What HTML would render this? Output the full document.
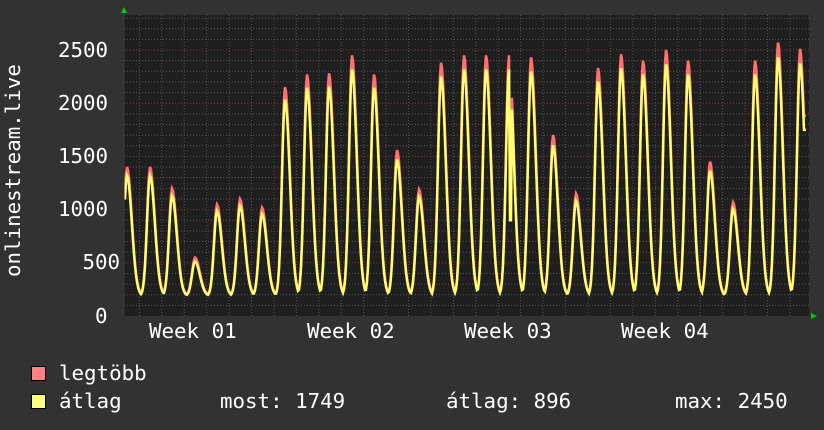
<!DOCTYPE html>
<html><head><meta charset="utf-8"><style>
html,body{margin:0;padding:0;background:#323232;}
body{width:824px;height:430px;position:relative;overflow:hidden;font-family:"DejaVu Sans Mono","Liberation Mono",monospace;color:#fff;}
.t{position:absolute;font-size:20.8px;white-space:pre;line-height:1;}
.sq{position:absolute;width:13px;height:13px;border:1px solid #000;}
</style></head><body>
<svg id="g" width="824" height="430" style="position:absolute;left:0;top:0"></svg>
<div class="t" style="left:58px;top:40px">2500</div>
<div class="t" style="left:58px;top:93px">2000</div>
<div class="t" style="left:58px;top:146px">1500</div>
<div class="t" style="left:58px;top:199px">1000</div>
<div class="t" style="left:70px;top:252px"> 500</div>
<div class="t" style="left:95px;top:306px">0</div>
<div class="t" style="left:149px;top:321px">Week 01</div>
<div class="t" style="left:307px;top:321px">Week 02</div>
<div class="t" style="left:464px;top:321px">Week 03</div>
<div class="t" style="left:621px;top:321px">Week 04</div>
<div class="t" style="left:3px;top:277px;transform:rotate(-90deg);transform-origin:0 0;">onlinestream.live</div>
<div class="sq" style="left:31px;top:366px;background:#ff8080"></div>
<div class="sq" style="left:31px;top:394px;background:#ffff80"></div>
<div class="t" style="left:59px;top:363px">legtöbb</div>
<div class="t" style="left:59px;top:391px">átlag</div>
<div class="t" style="left:220px;top:391px">most: 1749</div>
<div class="t" style="left:446px;top:391px">átlag: 896</div>
<div class="t" style="left:675px;top:391px">max: 2450</div>
<script>
var s='',L=124,R=809,T=15,B=316;
function Y(v){return B-v*(B-50)/2500;}
s+='<rect x="'+L+'" y="'+T+'" width="'+(R-L)+'" height="'+(B-T)+'" fill="#1f1f1f"/>';
for(var v=100;v<=2800;v+=100){var y=Y(v);if(y<T)break;
 s+='<line x1="'+L+'" x2="'+R+'" y1="'+y+'" y2="'+y+'" stroke="'+(v%500==0?'#6a3c3c':'#555')+'" stroke-dasharray="1,2"/>';}
for(var k=0;k<31;k++){var x=745-22.43*(27-k);if(x<L+2||x>R)continue;var maj=Math.abs((745-x)%157)<1||Math.abs(157-((745-x)%157))<1;
 s+='<line x1="'+x+'" x2="'+x+'" y1="'+T+'" y2="'+B+'" stroke="'+(maj?'#6a3c3c':'#555')+'" stroke-dasharray="1,2"/>';}
var pk=[[127,1400],[150,1400],[172,1200],[195,550],[217,1050],[240,1100],[262,1020],[285,2150],[307,2270],[329,2280],[352,2450],[374,2270],[397,1560],[419,1190],[441,2380],[464,2450],[486,2450],[509,2450],[531,2430],[553,1700],[576,1150],[598,2330],[621,2460],[643,2400],[666,2500],[688,2400],[710,1450],[733,1070],[755,2400],[778,2570],[800,2510]];
function f(x,a){var m=0;for(var i=0;i<pk.length;i++){var d=x-pk[i][0],sg=d<0?3:4.8;var p=pk[i][1]*a;var v=(p-200)*Math.exp(-d*d/(2*sg*sg));if(v>m)m=v;}return 200+m;}
var pm='',pa='';
for(var x=L+1;x<=806;x++){
 var vm=f(x,1),va=f(x,0.95)-10;
 if(x>=804){vm=1880;va=1749;}
 if(x==510||x==511){vm=1200;va=900;}
 pm+=x+','+Y(vm).toFixed(1)+' ';pa+=x+','+Y(va).toFixed(1)+' ';}
s+='<polyline points="'+pm+'" fill="none" stroke="#ff7070" stroke-width="2.5"/>';
s+='<polyline points="'+pa+'" fill="none" stroke="#ffff70" stroke-width="2.5"/>';
s+='<line x1="'+L+'" x2="'+L+'" y1="12" y2="'+B+'" stroke="#3a3a3a"/>';
s+='<polygon points="121,13 127,13 124,7" fill="#00d000"/>';
s+='<polygon points="811,313 811,319 817,316" fill="#00d000"/>';
document.getElementById('g').innerHTML=s;
</script>
</body></html>
